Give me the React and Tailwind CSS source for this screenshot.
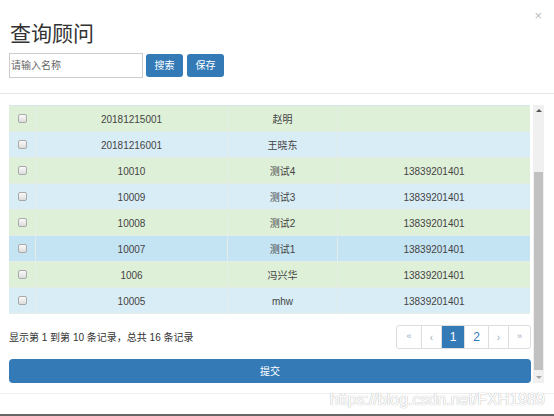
import React from 'react'

const rows = [
  { no: '20181215001', name: '赵明', phone: '', bg: 'bg-[#dff0d8]' },
  { no: '20181216001', name: '王晓东', phone: '', bg: 'bg-[#d9edf7]' },
  { no: '10010', name: '测试4', phone: '13839201401', bg: 'bg-[#dff0d8]' },
  { no: '10009', name: '测试3', phone: '13839201401', bg: 'bg-[#d9edf7]' },
  { no: '10008', name: '测试2', phone: '13839201401', bg: 'bg-[#dff0d8]' },
  { no: '10007', name: '测试1', phone: '13839201401', bg: 'bg-[#c4e3f3]' },
  { no: '1006', name: '冯兴华', phone: '13839201401', bg: 'bg-[#dff0d8]' },
  { no: '10005', name: 'mhw', phone: '13839201401', bg: 'bg-[#d9edf7]' },
]

const pages = [
  { label: '«', w: 'w-[24px]', cls: 'text-[#9ab] text-[9px]' },
  { label: '‹', w: 'w-[20px]', cls: 'text-[#9ab] text-[10px]' },
  { label: '1', w: 'w-[23px]', active: true },
  { label: '2', w: 'w-[24px]', cls: 'text-[#337ab7] text-[12px]' },
  { label: '›', w: 'w-[20px]', cls: 'text-[#9ab] text-[10px]' },
  { label: '»', w: 'w-[22px]', cls: 'text-[#9ab] text-[9px]' },
]

function Checkbox() {
  return <span className="block w-[9px] h-[9px] rounded-[2px] border border-[#a9a9a9] bg-gradient-to-b from-[#fafafa] to-[#dcdcdc]" />
}

export default function App() {
  return (
    <div className="relative w-[554px] h-[416px] bg-white overflow-hidden text-[#333] font-['Liberation_Sans','Noto_Sans_CJK_SC',sans-serif]">
      {/* header */}
      <div className="relative h-[94px] border-b border-[#e5e5e5] px-[9px] pt-[22px]">
        <span className="absolute right-[12px] top-[9px] text-[13px] leading-none text-[#bbb]">×</span>
        <h4 className="text-[21px] leading-[24px] h-[24px] pl-[1px] text-[#333]">查询顾问</h4>
        <div className="flex items-center mt-[7px]">
          <div className="w-[134px] h-[25px] border border-[#ccc] flex items-center pl-[1px] text-[10px] text-[#666]">请输入名称</div>
          <button className="ml-[3px] w-[37px] h-[23px] rounded-[3px] bg-[#337ab7] text-white text-[10px]">搜索</button>
          <button className="ml-[4px] w-[37px] h-[23px] rounded-[3px] bg-[#337ab7] text-white text-[10px]">保存</button>
        </div>
      </div>

      {/* body */}
      <div className="flex pt-[11px] h-[299px]">
        <div className="ml-[9px] w-[521px] flex flex-col">
          <div className="border-t border-[#d6e6ec]">
            {rows.map((r) => (
              <div key={r.no} className={`flex h-[26px] text-[10px] text-[#444] pt-[1px] border-b border-[#e6ece6] ${r.bg}`}>
                <div className="w-[27px] flex items-center justify-center border-r border-[#e6ece6] pb-[2px]"><Checkbox /></div>
                <div className="w-[192px] flex items-center justify-center border-r border-[#e6ece6]">{r.no}</div>
                <div className="w-[110px] flex items-center justify-center border-r border-[#e6ece6]">{r.name}</div>
                <div className="flex-1 flex items-center justify-center">{r.phone}</div>
              </div>
            ))}
          </div>
          <div className="flex items-center justify-between mt-[11px] h-[24px]">
            <span className="text-[10px]">显示第 1 到第 10 条记录，总共 16 条记录</span>
            <div className="flex h-[24px] border border-[#ddd] rounded-[3px] overflow-hidden mr-[-1px]">
              {pages.map((p, i) => (
                <div
                  key={i}
                  className={`${p.w} flex items-center justify-center ${i > 0 ? 'border-l border-[#ddd]' : ''} ${p.active ? 'bg-[#337ab7] text-white text-[12px]' : p.cls}`}
                >
                  {p.label}
                </div>
              ))}
            </div>
          </div>
          <button className="mt-[10px] h-[24px] w-[522px] rounded-[4px] bg-[#337ab7] text-white text-[10px]">提交</button>
        </div>
        {/* scrollbar */}
        <div className="ml-[3px] w-[11px] h-[278px] bg-[#f0f0f0] flex flex-col items-center">
          <div className="h-[11px] flex items-center justify-center">
            <span className="w-0 h-0 border-l-[3px] border-r-[3px] border-b-[3px] border-l-transparent border-r-transparent border-b-[#555]" />
          </div>
          <div className="mt-[56px] w-[9px] h-[198px] bg-[#c1c1c1]" />
          <div className="mt-auto h-[11px] flex items-center justify-center">
            <span className="w-0 h-0 border-l-[3px] border-r-[3px] border-t-[3px] border-l-transparent border-r-transparent border-t-[#a3a3a3]" />
          </div>
        </div>
      </div>

      {/* footer */}
      <div className="border-t border-[#eee] h-[21px]" />
      <div className="absolute left-0 right-0 bottom-0 h-[2px] bg-[#666]" />
      <span className="absolute right-[9px] bottom-[8px] text-[16px] leading-none text-white [text-shadow:0_0_1px_#bbb,0_0_1px_#bbb]">https://blog.csdn.net/FXH1989</span>
    </div>
  )
}
